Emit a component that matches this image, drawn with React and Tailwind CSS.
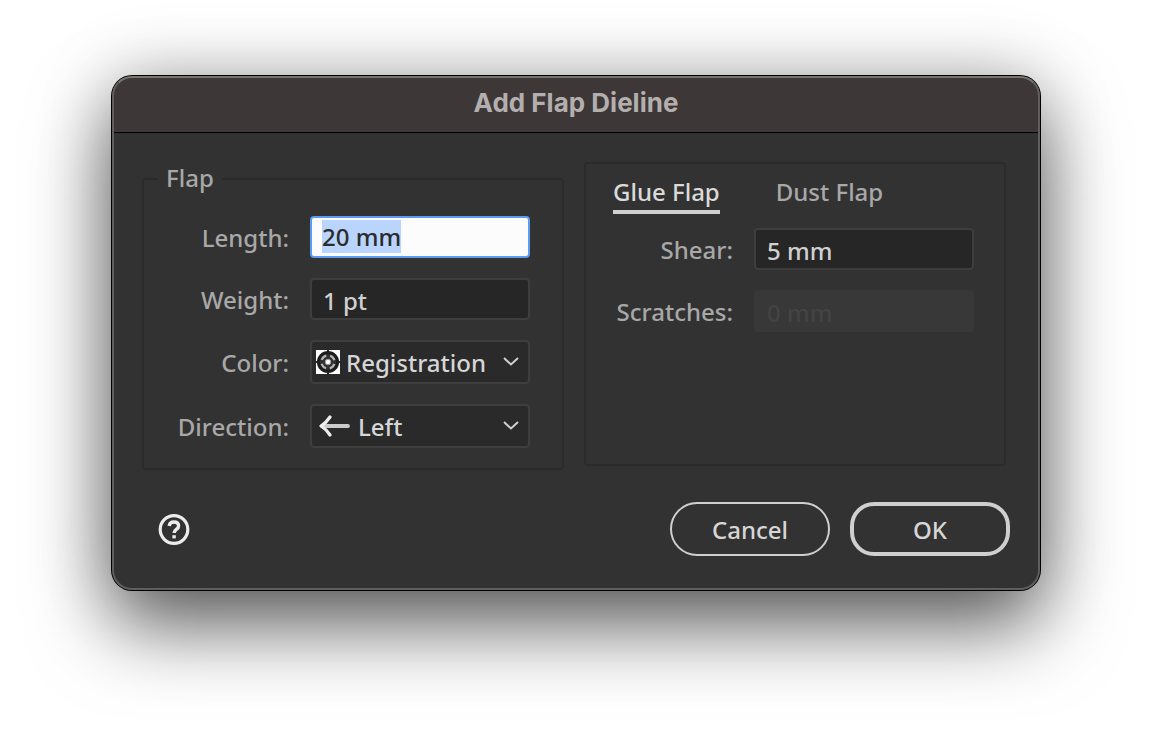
import { useEffect, useRef, useState } from "react";

const FIELD =
  "h-[42px] w-[220px] shrink-0 rounded border-2 px-[11px] pt-0.5 text-2xl leading-[30px] outline-none selection:bg-[#b9d5fd] selection:text-[#2b2b2b]";
const DARK = "border-[#3e3e3e] bg-[#262626] text-[#d0d0d0]";
const LABEL = "whitespace-nowrap text-2xl text-[#a8a8a8]";
const SELECT =
  "block h-11 w-full appearance-none rounded border-2 border-[#3e3e3e] bg-[#2a2a2a] pt-0.5 text-2xl leading-[34px] text-[#d6d6d6]";

function Row({ id, label, children }) {
  return (
    <div className="flex items-center justify-end gap-[21px]">
      <label htmlFor={id} className={`pt-0.5 ${LABEL}`}>
        {label}
      </label>
      {children}
    </div>
  );
}

function Chevron() {
  return (
    <svg
      className="pointer-events-none absolute top-[15px] right-2.5 h-3 w-[18px]"
      viewBox="0 0 18 12"
      fill="none"
      stroke="#cfcfcf"
      strokeWidth="2"
      aria-hidden="true"
    >
      <path d="M2 3 9 9.5l7-6.5" />
    </svg>
  );
}

function RegistrationSwatch() {
  return (
    <svg className="pointer-events-none absolute top-2.5 left-1.5 size-6" viewBox="0 0 24 24" aria-hidden="true">
      <rect width="24" height="24" fill="#fff" />
      <circle cx="12" cy="12" r="9.6" fill="#303030" stroke="#1c1c1c" strokeWidth="3" />
      <circle cx="12" cy="12" r="6.6" fill="none" stroke="#b5b5b5" strokeWidth="2.2" strokeDasharray="6.4 3.967" strokeDashoffset="-1.98" />
      <circle cx="12" cy="12" r="2.8" fill="#fff" stroke="#999" strokeWidth="1" />
      <path d="M12 0v3M12 21v3M0 12h3M21 12h3" stroke="#222" strokeWidth="2" />
    </svg>
  );
}

function LeftArrow() {
  return (
    <svg
      className="pointer-events-none absolute top-[11px] left-2 h-[22px] w-8"
      viewBox="0 0 32 22"
      fill="none"
      strokeLinecap="round"
      strokeLinejoin="round"
      aria-hidden="true"
    >
      <path d="M4 11h26" stroke="#cbcbcb" strokeWidth="3.8" />
      <path d="M12 2Q8 8 3 11q5 3 9 9" stroke="#ededed" strokeWidth="3.2" />
    </svg>
  );
}

export default function App() {
  const lengthRef = useRef(null);
  const [tab, setTab] = useState("glue");

  useEffect(() => {
    lengthRef.current.focus();
    lengthRef.current.select();
  }, []);

  const tabClass = (name) =>
    name === tab
      ? "border-b-4 border-[#cfcfcf] pb-[3px] text-[#dadada]"
      : "border-b-4 border-transparent pb-[3px] text-[#a8a8a8]";

  return (
    <main className="min-h-screen overflow-hidden bg-white px-28 py-19 font-['Noto_Sans',sans-serif] font-medium">
      <section
        role="dialog"
        aria-labelledby="title"
        className="relative mx-auto max-w-[928px] rounded-[20px] bg-[#323232] shadow-[0_0_0_1px_#000,0_36px_80px_rgba(0,0,0,0.6),0_0_72px_rgba(0,0,0,0.22)]"
      >
        <header className="flex h-[57px] items-center justify-center rounded-t-[20px] border-b border-black bg-[#3e3737]">
          <h1 id="title" className="pb-0.5 font-['Inter',sans-serif] text-[26px] leading-8 font-bold text-[#b4afaf]">
            Add Flap Dieline
          </h1>
        </header>

        <form onSubmit={(e) => e.preventDefault()} className="pt-[29px] pb-[34px]">
          <div className="grid grid-cols-2 items-start gap-5 pr-[34px] pl-[30px]">
            <fieldset className="min-w-0 rounded border-2 border-[#2b2b2b] pr-8 pb-5">
              <legend className={`ml-3.5 px-2 pb-[3px] leading-[31px] ${LABEL}`}>Flap</legend>
              <div className="flex flex-col gap-5 pt-5">
                <Row id="length" label="Length:">
                  <input
                    id="length"
                    ref={lengthRef}
                    defaultValue="20 mm"
                    className="h-[42px] w-[220px] shrink-0 rounded border-2 border-[#5b9bf0] bg-[#fcfcfc] px-2.5 pb-0.5 text-2xl leading-[30px] text-[#2b2b2b] outline-none selection:bg-[#b9d5fd] selection:text-[#2b2b2b]"
                  />
                </Row>
                <Row id="weight" label="Weight:">
                  <input id="weight" defaultValue="1 pt" className={`${FIELD} ${DARK}`} />
                </Row>
                <Row id="color" label="Color:">
                  <div className="relative w-[220px] shrink-0">
                    <select id="color" className={`${SELECT} pl-[34px]`}>
                      <option>Registration</option>
                    </select>
                    <RegistrationSwatch />
                    <Chevron />
                  </div>
                </Row>
                <Row id="direction" label="Direction:">
                  <div className="relative w-[220px] shrink-0">
                    <select id="direction" className={`${SELECT} pl-[46px]`}>
                      <option>Left</option>
                    </select>
                    <LeftArrow />
                    <Chevron />
                  </div>
                </Row>
              </div>
            </fieldset>

            <div className="min-h-[304px] rounded border-2 border-[#2b2b2b] pt-3 pr-[30px]">
              <div role="tablist" className="flex gap-14 pl-[27px] text-2xl leading-[31px]">
                <button type="button" role="tab" aria-selected={tab === "glue"} onClick={() => setTab("glue")} className={tabClass("glue")}>
                  Glue Flap
                </button>
                <button type="button" role="tab" aria-selected={tab === "dust"} onClick={() => setTab("dust")} className={tabClass("dust")}>
                  Dust Flap
                </button>
              </div>
              <div className="flex flex-col gap-5 pt-3.5">
                <Row id="shear" label="Shear:">
                  <input id="shear" defaultValue="5 mm" className={`${FIELD} ${DARK}`} />
                </Row>
                <Row id="scratches" label="Scratches:">
                  <input
                    id="scratches"
                    defaultValue="0 mm"
                    disabled
                    className={`${FIELD} border-[#383838] bg-[#383838] text-[#434343]`}
                  />
                </Row>
              </div>
            </div>
          </div>

          <footer className="flex items-center justify-between pt-8 pr-[30px] pl-[46px]">
            <button type="button" aria-label="Help" className="size-8">
              <svg viewBox="0 0 32 32" fill="none" stroke="#ececec" className="size-8" aria-hidden="true">
                <circle cx="16" cy="16.5" r="13.8" strokeWidth="3.2" />
                <path d="M11.2 13c.3-2.7 2.2-4 4.7-4 2.8 0 4.7 1.5 4.7 3.9 0 3.5-4.5 3.5-4.5 7" strokeWidth="3.4" />
                <path d="M16.1 22.2v3.2" strokeWidth="3.4" />
              </svg>
            </button>
            <div className="flex gap-5">
              <button type="button" className="h-[54px] w-40 rounded-full border-2 border-[#cfcfcf] pt-0.5 text-2xl text-[#d6d6d6]">
                Cancel
              </button>
              <button type="submit" className="h-[54px] w-40 rounded-3xl border-4 border-[#cfcfcf] pt-0.5 text-2xl text-[#d6d6d6]">
                OK
              </button>
            </div>
          </footer>
        </form>
        <div className="pointer-events-none absolute inset-0 rounded-[20px] border-2 border-t-[#777472] border-x-[#5f5d5d] border-b-[#5f5d5d]" />
      </section>
    </main>
  );
}
